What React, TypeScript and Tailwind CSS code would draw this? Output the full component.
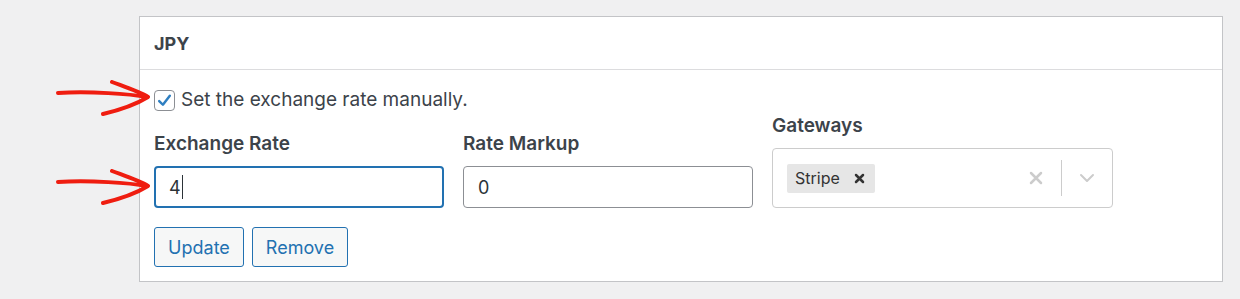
function Arrow({ y }: { y: number }) {
  return (
    <svg
      className="pointer-events-none absolute left-[50px]"
      style={{ top: y }}
      width="110"
      height="40"
      viewBox="0 0 110 40"
      fill="none"
    >
      <path
        d="M8 13 C 40 11, 80 14, 97 17"
        stroke="#ef1d10"
        strokeWidth="4"
        strokeLinecap="round"
      />
      <path
        d="M62 2 C 78 8, 90 12, 98 17 C 85 25, 70 30, 53 34"
        stroke="#ef1d10"
        strokeWidth="4"
        strokeLinecap="round"
        strokeLinejoin="round"
      />
    </svg>
  );
}

function Field({ label, value, focused }: { label: string; value: string; focused?: boolean }) {
  return (
    <div className="flex w-[290px] flex-col">
      <label className="mb-[11px] text-[19px] font-semibold leading-[22px] text-[#3c434a]">{label}</label>
      <div
        className={
          focused
            ? "flex h-[42px] items-center rounded-[4px] border-2 border-[#2271b1] bg-white px-[13px] text-[18px] text-[#2c3338]"
            : "flex h-[42px] items-center rounded-[4px] border border-[#8c8f94] bg-white px-[14px] text-[18px] text-[#2c3338]"
        }
      >
        {value}
        {focused && <span className="ml-[1px] h-[24px] w-[1px] bg-[#2c3338]" />}
      </div>
    </div>
  );
}

export default function App() {
  return (
    <div className="relative h-[299px] w-[1240px] bg-[#f0f0f1] pl-[139px] pt-[16px] font-['Inter',sans-serif]">
      <div className="w-[1084px] border border-[#c3c4c7] bg-white">
        <div className="flex h-[53px] items-center border-b border-[#dcdcde] px-[14px]">
          <h3 className="text-[18px] font-bold text-[#3c434a]">JPY</h3>
        </div>

        <div className="px-[14px] pb-[14px] pt-[19px]">
          <label className="flex items-center gap-[6px] text-[19px] leading-[22px] text-[#3c434a]">
            <span className="flex h-[21px] w-[21px] items-center justify-center rounded-[4px] border border-[#8c8f94] bg-white">
              <svg width="17" height="17" viewBox="0 0 16 16" fill="none">
                <path d="M3 8.5 L6.5 12 L13 3.5" stroke="#2f7fc1" strokeWidth="2.3" strokeLinecap="round" strokeLinejoin="round" />
              </svg>
            </span>
            Set the exchange rate manually.
          </label>

          <div className="mt-[4px] flex items-end gap-[19px]">
            <Field label="Exchange Rate" value="4" focused />
            <Field label="Rate Markup" value="0" />
            <div className="flex w-[341px] flex-col">
              <label className="mb-[11px] text-[19px] font-semibold leading-[22px] text-[#3c434a]">Gateways</label>
              <div className="flex h-[60px] items-center rounded-[4px] border border-[#cccccc] bg-white pl-[14px]">
                <div className="flex h-[29px] items-center gap-[14px] rounded-[2px] bg-[#e6e6e6] pl-[8px] pr-[10px] text-[16px] text-[#333333]">
                  Stripe
                  <svg width="11" height="11" viewBox="0 0 11 11">
                    <path d="M2 2 L9 9 M9 2 L2 9" stroke="#333333" strokeWidth="2.5" strokeLinecap="round" />
                  </svg>
                </div>
                <div className="ml-auto flex items-center">
                  <svg width="14" height="14" viewBox="0 0 14 14" className="mr-[18px]">
                    <path d="M2 2 L12 12 M12 2 L2 12" stroke="#cccccc" strokeWidth="2.5" strokeLinecap="round" />
                  </svg>
                  <span className="h-[36px] w-[1px] bg-[#cccccc]" />
                  <svg width="16" height="10" viewBox="0 0 16 10" className="mx-[17px]">
                    <path d="M2 2 L8 8 L14 2" stroke="#cccccc" strokeWidth="2" fill="none" strokeLinecap="round" strokeLinejoin="round" />
                  </svg>
                </div>
              </div>
            </div>
          </div>

          <div className="mt-[19px] flex gap-[8px]">
            <button className="h-[40px] w-[90px] rounded-[3px] border border-[#2271b1] bg-[#f6f7f7] text-[18px] text-[#2271b1]">
              Update
            </button>
            <button className="h-[40px] w-[96px] rounded-[3px] border border-[#2271b1] bg-[#f6f7f7] text-[18px] text-[#2271b1]">
              Remove
            </button>
          </div>
        </div>
      </div>

      <Arrow y={80} />
      <Arrow y={169} />
    </div>
  );
}
